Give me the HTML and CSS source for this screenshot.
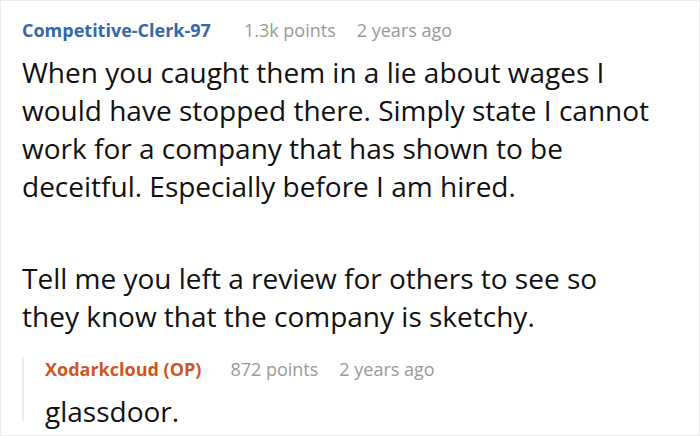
FILE: index.html
```html
<!DOCTYPE html>
<html>
<head>
<meta charset="utf-8">
<link rel="stylesheet" href="styles.css">
</head>
<body>
<div class="card">
  <div class="meta">
    <span class="author">Competitive-Clerk-97</span>
    <span class="info">1.3k points</span>
    <span class="info">2 years ago</span>
  </div>
  <div class="body">
    <p>When you caught them in a lie about wages I would have stopped there. Simply state I cannot work for a company that has shown to be deceitful. Especially before I am hired.</p>
    <p>Tell me you left a review for others to see so they know that the company is sketchy.</p>
  </div>
  <div class="reply">
    <div class="meta">
      <span class="author op">Xodarkcloud (OP)</span>
      <span class="info">872 points</span>
      <span class="info">2 years ago</span>
    </div>
    <div class="reply-body">glassdoor.</div>
  </div>
</div>
</body>
</html>
```

FILE: styles.css
```css
html, body {
  margin: 0;
  padding: 0;
  background: #fff;
}
.card {
  width: 700px;
  height: 436px;
  box-sizing: border-box;
  border: 1px solid #ebebeb;
  padding: 17px 21px 0 21px;
  font-family: "Open Sans", "Noto Sans", sans-serif;
  color: #111;
}
.meta {
  display: flex;
  align-items: baseline;
  gap: 0 21px;
  font-size: 18px;
  line-height: 24px;
  margin-bottom: 11px;
}
.author {
  font-weight: 700;
  color: #3468a8;
  margin-right: 12px;
}
.author.op {
  color: #cf5522;
  margin-right: 8px;
}
.info {
  color: #999;
}
.body {
  font-size: 28px;
  line-height: 38px;
  width: 632px;
}
.body p {
  margin: 0 0 54px 0;
}
.body p:last-child {
  margin-bottom: 0;
}
.reply {
  margin-top: 31px;
  border-left: 2px solid #ebebeb;
  padding-left: 21px;
}
.reply .meta {
  margin-top: -9px;
  margin-bottom: 0;
}
.reply-body {
  font-size: 28px;
  line-height: 20px;
  padding: 20px 0 0 0;
}
```
